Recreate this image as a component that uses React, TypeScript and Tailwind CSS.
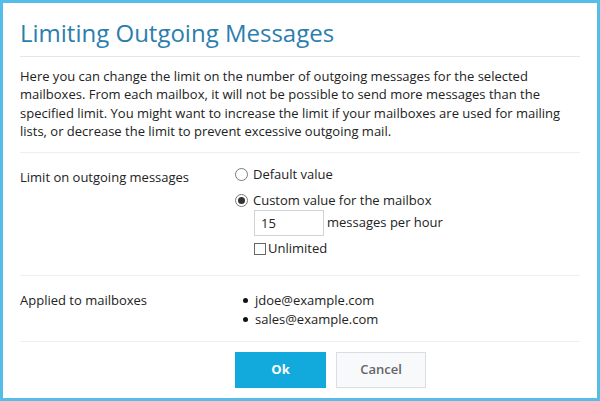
import React from 'react';

function Radio({ checked, label }: { checked?: boolean; label: string }) {
  return (
    <label className="flex items-center h-[20px] gap-[5px]">
      <span className="w-[13px] h-[13px] rounded-full border border-[#7a7a7a] bg-white flex items-center justify-center">
        {checked && <span className="w-[7px] h-[7px] rounded-full bg-[#333]" />}
      </span>
      <span>{label}</span>
    </label>
  );
}

const mailboxes = ['jdoe@example.com', 'sales@example.com'];

export default function App() {
  return (
    <div
      className="w-[600px] h-[401px] border-[3px] border-[#56bde9] bg-white px-[17px] text-[13px] text-[#222] flex flex-col"
      style={{ fontFamily: '"Open Sans", "Liberation Sans", sans-serif' }}
    >
      <div className="pt-[15px] pb-[8px] border-b border-[#e4e6ea]">
        <h1 className="text-[24px] leading-[30px] text-[#2b7ead]">Limiting Outgoing Messages</h1>
      </div>

      <p className="pt-[10px] pb-[11px] leading-[18.4px] border-b border-[#eceef0]">
        Here you can change the limit on the number of outgoing messages for the selected mailboxes. From each mailbox, it
        will not be possible to send more messages than the specified limit. You might want to increase the limit if your
        mailboxes are used for mailing lists, or decrease the limit to prevent excessive outgoing mail.
      </p>

      <div className="flex pt-[12px] pb-[17px] border-b border-[#eceef0]">
        <div className="w-[215px] pt-[3px] leading-[18px]">Limit on outgoing messages</div>
        <div className="flex flex-col">
          <Radio label="Default value" />
          <div className="mt-[6px]">
            <Radio checked label="Custom value for the mailbox" />
          </div>
          <div className="pl-[19px] flex flex-col">
            <div className="flex items-center gap-[3px] mt-[-1px]">
              <input
                className="w-[70px] h-[26px] border border-[#cfd3d7] px-[6px] text-[13px] text-[#222] outline-none"
                defaultValue="15"
              />
              <span>messages per hour</span>
            </div>
            <label className="flex items-center h-[18px] mt-[4px] gap-[2px]">
              <span className="w-[12px] h-[12px] border border-[#666] bg-white" />
              <span>Unlimited</span>
            </label>
          </div>
        </div>
      </div>

      <div className="flex pt-[15px] pb-[12px] border-b border-[#eceef0]">
        <div className="w-[215px] leading-[19px]">Applied to mailboxes</div>
        <ul className="flex flex-col">
          {mailboxes.map((m) => (
            <li key={m} className="flex items-center leading-[19px]">
              <span className="w-[5px] h-[5px] rounded-full bg-[#111] ml-[8px] mr-[7px]" />
              {m}
            </li>
          ))}
        </ul>
      </div>

      <div className="flex pt-[10px] pl-[215px] gap-[10px]">
        <button className="w-[91px] h-[36px] bg-[#12a9dc] text-white font-bold text-[13px]">Ok</button>
        <button className="w-[90px] h-[36px] bg-[#f8f9fa] border border-[#dadde1] text-[#62666b] font-semibold text-[13px]">
          Cancel
        </button>
      </div>
    </div>
  );
}
